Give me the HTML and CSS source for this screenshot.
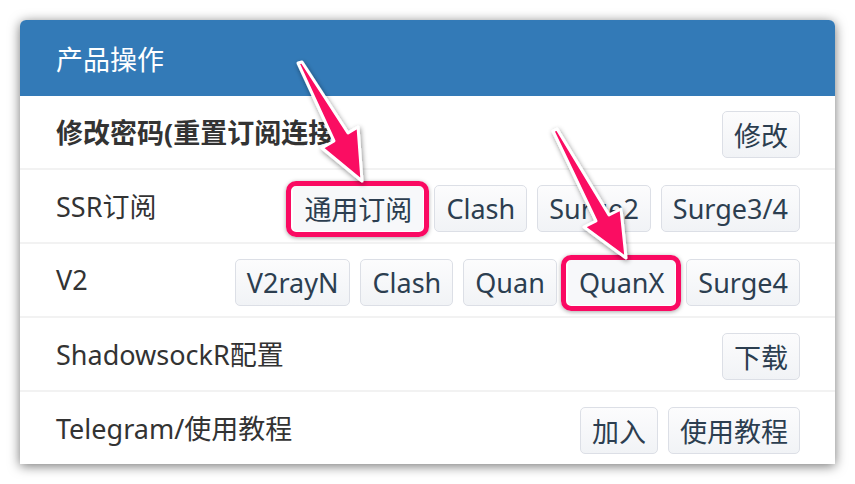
FILE: index.html
```html
<!DOCTYPE html>
<html lang="zh">
<head>
<meta charset="utf-8">
<link rel="stylesheet" href="styles.css">
</head>
<body>
<div class="stage">
  <div class="panel">
    <div class="panel-heading">产品操作</div>
    <div class="row">
      <div class="label bold">修改密码(重置订阅连接)</div>
      <div class="btns"><span class="btn">修改</span></div>
    </div>
    <div class="row">
      <div class="label">SSR订阅</div>
      <div class="btns">
        <span class="btn hl">通用订阅</span>
        <span class="btn">Clash</span>
        <span class="btn">Surge2</span>
        <span class="btn">Surge3/4</span>
      </div>
    </div>
    <div class="row">
      <div class="label">V2</div>
      <div class="btns">
        <span class="btn">V2rayN</span>
        <span class="btn">Clash</span>
        <span class="btn">Quan</span>
        <span class="btn hl">QuanX</span>
        <span class="btn">Surge4</span>
      </div>
    </div>
    <div class="row">
      <div class="label">ShadowsockR配置</div>
      <div class="btns"><span class="btn">下载</span></div>
    </div>
    <div class="row last">
      <div class="label">Telegram/使用教程</div>
      <div class="btns">
        <span class="btn">加入</span>
        <span class="btn">使用教程</span>
      </div>
    </div>
  </div>
  <svg class="arrows" width="855" height="484" viewBox="0 0 855 484">
    <defs>
      <filter id="sh" x="-50%" y="-50%" width="200%" height="200%">
        <feDropShadow dx="1" dy="2" stdDeviation="2.5" flood-color="#000" flood-opacity="0.45"/>
      </filter>
    </defs>
    <polygon filter="url(#sh)" points="298,63 302,62 348,133 358,127 362,181 322,148 334,141" fill="#fa0a62" stroke="#fff" stroke-width="3" stroke-linejoin="round"/>
    <polygon filter="url(#sh)" points="553,131 557,129 609,215 621,209 626,258 584,227 596,221" fill="#fa0a62" stroke="#fff" stroke-width="3" stroke-linejoin="round"/>
  </svg>
</div>
</body>
</html>
```
FILE: styles.css
```css
html, body {
  margin: 0;
  padding: 0;
  background: #fff;
}
.stage {
  position: relative;
  width: 855px;
  height: 484px;
  padding: 20px;
  box-sizing: border-box;
  overflow: hidden;
}
.panel {
  width: 815px;
  height: 444px;
  background: #fff;
  border-radius: 6px 6px 0 0;
  box-shadow: 0 2px 12px rgba(0,0,0,0.55);
  overflow: hidden;
  font-family: "Noto Sans", "Noto Sans CJK SC", sans-serif;
  color: #333;
}
.panel-heading {
  height: 76px;
  box-sizing: border-box;
  background: #337ab7;
  color: #fff;
  font-size: 27px;
  padding-left: 36px;
  display: flex;
  align-items: center;
}
.row {
  height: 74px;
  box-sizing: border-box;
  border-bottom: 2px solid #f2f2f2;
  display: flex;
  align-items: center;
  justify-content: space-between;
  padding: 0 35px 0 36px;
}
.row.last {
  border-bottom: none;
  height: 72px;
}
.label {
  font-size: 27px;
  color: #333;
  margin-top: -2px;
}
.label.bold {
  font-weight: 700;
}
.btns {
  display: flex;
  gap: 10px;
  margin-top: 5px;
}
.btn {
  position: relative;
  height: 47px;
  box-sizing: border-box;
  padding: 0 11px;
  display: flex;
  align-items: center;
  font-size: 27px;
  color: #2c3e50;
  background: linear-gradient(#fcfcfd, #f1f3f6);
  border: 1px solid #dcdfe6;
  border-radius: 5px;
}
.btn.hl::after {
  content: "";
  position: absolute;
  left: -7px;
  right: -6px;
  top: -5px;
  bottom: -6px;
  border: 5px solid #fa0a62;
  border-radius: 10px;
  box-shadow: 0 1px 4px rgba(0,0,0,0.35);
}
.btn.hl {
  background: #f7f8fa;
  border-color: #fff;
}
.arrows {
  position: absolute;
  left: 0;
  top: 0;
}
```
